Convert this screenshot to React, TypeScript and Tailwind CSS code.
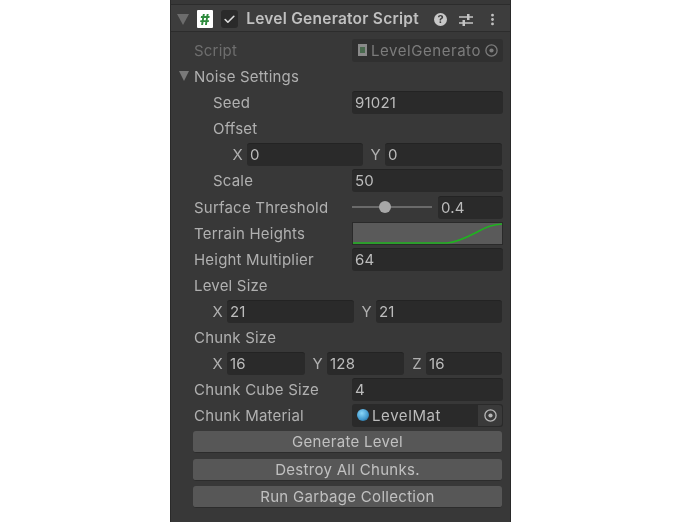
import { MoreVertical, Check } from "lucide-react";

const labelCls = "text-[15px] text-[#b0b0b0] leading-none tracking-[0.2px]";
const fieldCls =
  "h-[23px] bg-[#2a2a2a] rounded-[3px] border-t border-[#232323] flex items-center pl-[3px] text-[15px] text-[#bcbcbc] leading-none tracking-[0.2px]";

function Row({ label, indent, children }: { label: string; indent?: boolean; children?: React.ReactNode }) {
  return (
    <div className={"h-[26px] flex items-center " + (indent ? "pl-[42px]" : "pl-[23px]")}>
      <div className={"shrink-0 " + (indent ? "w-[139px]" : "w-[158px]")}>
        <span className={labelCls}>{label}</span>
      </div>
      <div className="w-[151px]">{children}</div>
    </div>
  );
}

function Axis({ name, value, width }: { name: string; value: string; width: string }) {
  return (
    <div className="flex items-center gap-[4px]">
      <span className={labelCls + " w-[13px] text-right"}>{name}</span>
      <div className={fieldCls + " " + width}>{value}</div>
    </div>
  );
}

function ActionButton({ label }: { label: string }) {
  return (
    <button className="ml-[22px] w-[309px] h-[22px] bg-[#575757] rounded-[3px] border-b border-[#2c2c2c] text-[15px] text-[#c0c0c0] leading-none tracking-[0.3px] flex items-center justify-center">
      {label}
    </button>
  );
}

function ObjectDot() {
  return (
    <svg width="15" height="15" viewBox="0 0 15 15" className="shrink-0">
      <circle cx="7.5" cy="7.5" r="5.6" fill="none" stroke="currentColor" strokeWidth="1.3" />
      <circle cx="7.5" cy="7.5" r="2.1" fill="currentColor" />
    </svg>
  );
}

export default function App() {
  return (
    <div className="w-[682px] h-[522px] bg-white flex justify-center" style={{ fontFamily: "Inter, 'Noto Sans', sans-serif" }}>
      <div className="w-[341px] h-full mr-[1px] bg-[#383838] border-x border-[#2a2a2a] pt-[3px] blur-[0.4px]">
        <div className="h-[28px] mt-[1px] pt-[2px] bg-[#3d3d3d] border-y border-[#2c2c2c] flex items-center pl-[6px] pr-[10px]">
          <svg width="12" height="11" viewBox="0 0 12 11" className="shrink-0">
            <path d="M0 0h12L6 11z" fill="#6c6c6c" />
          </svg>
          <div className="ml-[8px] w-[16px] h-[18px] bg-white rounded-[1px] flex items-center justify-center text-[15px] font-extrabold text-[#2e8b3d] leading-none">#</div>
          <div className="ml-[8px] w-[18px] h-[18px] bg-[#2a2a2a] rounded-[3px] flex items-center justify-center">
            <Check size={13} strokeWidth={3} className="text-[#dcdcdc]" />
          </div>
          <span className="ml-[8px] text-[15.5px] font-semibold text-[#c0c0c0] leading-none whitespace-nowrap tracking-[0.25px]">Level Generator Script</span>
          <div className="ml-[15px] flex items-center">
            <div className="w-[13px] h-[13px] rounded-full bg-[#c8c8c8] flex items-center justify-center text-[11px] font-bold text-[#3d3d3d] leading-none">?</div>
            <svg width="14" height="13" viewBox="0 0 14 13" className="ml-[12px] shrink-0">
              <path d="M0 4h14M0 10h14" stroke="#c4c4c4" strokeWidth="1.3" />
              <rect x="8" y="1" width="2.5" height="6" fill="#c4c4c4" />
              <rect x="3.5" y="7" width="2.5" height="6" fill="#c4c4c4" />
            </svg>
            <MoreVertical size={15} strokeWidth={2.5} className="ml-[12px] text-[#c4c4c4]" />
          </div>
        </div>

        <div className="pt-[5px]">
          <div className="h-[26px] flex items-center pl-[23px]">
            <div className="w-[158px]">
              <span className="text-[15px] text-[#6e6e6e] leading-none tracking-[0.2px]">Script</span>
            </div>
            <div className="w-[151px] h-[23px] bg-[#303030] rounded-[3px] flex items-center pl-[6px] pr-[4px] text-[15px] text-[#7c7c7c] leading-none tracking-[0.55px]">
              <svg width="9" height="12" viewBox="0 0 9 12" className="shrink-0 mr-[4px]">
                <rect width="9" height="12" fill="#8a8a8a" />
                <rect x="2" y="3" width="5" height="6" fill="#4a6a4f" />
              </svg>
              <span className="whitespace-nowrap flex-1">LevelGenerato</span>
              <ObjectDot />
            </div>
          </div>

          <div className="h-[26px] flex items-center pl-[7px]">
            <svg width="12" height="10" viewBox="0 0 12 10" className="shrink-0 mr-[4px]">
              <path d="M1 0h10L6 10z" fill="#7a7a7a" />
            </svg>
            <span className={labelCls}>Noise Settings</span>
          </div>

          <Row label="Seed" indent>
            <div className={fieldCls}>91021</div>
          </Row>

          <div className="h-[26px] flex items-center pl-[42px]">
            <span className={labelCls}>Offset</span>
          </div>
          <div className="h-[26px] flex items-center pl-[59px] gap-[5px]">
            <Axis name="X" value="0" width="w-[116px]" />
            <Axis name="Y" value="0" width="w-[117px]" />
          </div>

          <Row label="Scale" indent>
            <div className={fieldCls}>50</div>
          </Row>

          <div className="mt-[1px]">
            <Row label="Surface Threshold">
              <div className="flex items-center">
                <div className="relative w-[80px] h-[2px] bg-[#6a6a6a]">
                  <div className="absolute left-[27px] top-[-5px] w-[12px] h-[12px] rounded-full bg-[#a8a8a8]" />
                </div>
                <div className={fieldCls + " w-[65px] ml-[6px]"}>0.4</div>
              </div>
            </Row>
          </div>

          <Row label="Terrain Heights">
            <div className="h-[23px] bg-[#5a5a5a] border border-[#2a2a2a] overflow-hidden">
              <svg width="149" height="21" viewBox="0 0 149 21" className="block">
                <path d="M0 20 L94 20 C106 19 116 13 126 8 C133 4 139 1.500 149 1" fill="none" stroke="#1fb31f" strokeWidth="1.7" />
              </svg>
            </div>
          </Row>

          <Row label="Height Multiplier">
            <div className={fieldCls}>64</div>
          </Row>

          <div className="h-[26px] flex items-center pl-[23px]">
            <span className={labelCls}>Level Size</span>
          </div>
          <div className="h-[26px] flex items-center pl-[39px] gap-[5px]">
            <Axis name="X" value="21" width="w-[127px]" />
            <Axis name="Y" value="21" width="w-[126px]" />
          </div>

          <div className="h-[26px] flex items-center pl-[23px]">
            <span className={labelCls}>Chunk Size</span>
          </div>
          <div className="h-[26px] flex items-center pl-[39px] gap-[5px]">
            <Axis name="X" value="16" width="w-[78px]" />
            <Axis name="Y" value="128" width="w-[77px]" />
            <Axis name="Z" value="16" width="w-[76px]" />
          </div>

          <Row label="Chunk Cube Size">
            <div className={fieldCls}>4</div>
          </Row>

          <Row label="Chunk Material">
            <div className="h-[23px] bg-[#2a2a2a] rounded-[3px] flex items-center pl-[5px] pr-[1px] text-[15px] text-[#bcbcbc] leading-none tracking-[0.6px]">
              <div className="w-[12px] h-[12px] rounded-full bg-[radial-gradient(circle_at_40%_35%,#8ad6f7,#3f97cc_60%,#1e4a66)] mr-[3px] shrink-0" />
              <span className="flex-1">LevelMat</span>
              <div className="w-[24px] h-[21px] bg-[#3a3a3a] rounded-r-[3px] flex items-center justify-center text-[#b8b8b8]">
                <ObjectDot />
              </div>
            </div>
          </Row>

          <div className="flex flex-col gap-[5.500px] pt-[3px]">
            <ActionButton label="Generate Level" />
            <ActionButton label="Destroy All Chunks." />
            <ActionButton label="Run Garbage Collection" />
          </div>
        </div>
      </div>
    </div>
  );
}
